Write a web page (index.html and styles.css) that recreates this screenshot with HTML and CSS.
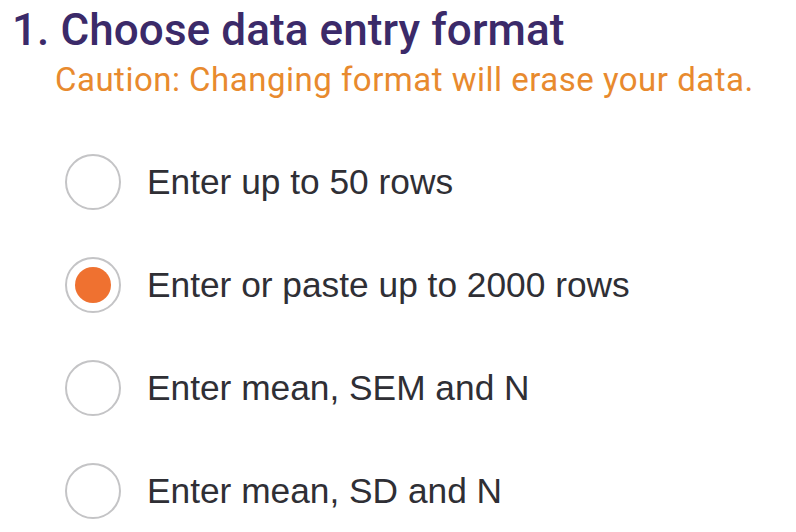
FILE: index.html
```html
<!doctype html>
<html lang="en">
  <head>
    <meta charset="utf-8">
    <title>Data entry format</title>
    <link rel="stylesheet" href="styles.css">
  </head>
  <body>
    <section class="step">
      <h1 class="step-title">1. Choose data entry format</h1>
      <p class="caution">Caution: Changing format will erase your data.</p>

      <div class="options">
        <label class="option">
          <input type="radio" name="format" value="rows50">
          <span class="radio"></span>
          <span class="option-text">Enter up to 50 rows</span>
        </label>
        <label class="option">
          <input type="radio" name="format" value="rows2000" checked>
          <span class="radio"></span>
          <span class="option-text">Enter or paste up to 2000 rows</span>
        </label>
        <label class="option">
          <input type="radio" name="format" value="sem">
          <span class="radio"></span>
          <span class="option-text">Enter mean, SEM and N</span>
        </label>
        <label class="option">
          <input type="radio" name="format" value="sd">
          <span class="radio"></span>
          <span class="option-text">Enter mean, SD and N</span>
        </label>
      </div>
    </section>
  </body>
</html>
```

FILE: styles.css
```css
html {
  --title-color: #3b2a69;
  --caution-color: #e88a2e;
  --radio-color: #ef7130;
  --text-color: #2f2f35;
}

body {
  margin: 0;
  background-color: #ffffff;
}

.step {
  padding: 4px 0 0 12px;
}

.step-title {
  margin: 0;
  font-family: Roboto, sans-serif;
  font-weight: 500;
  font-size: 44px;
  line-height: 52px;
  letter-spacing: 0.002em;
  color: var(--title-color);
}

.caution {
  margin: 4px 0 0 43px;
  font-family: Roboto, sans-serif;
  font-weight: 400;
  font-size: 33px;
  line-height: 40px;
  letter-spacing: 0.015em;
  color: var(--caution-color);
}

.options {
  display: flex;
  flex-direction: column;
  gap: 47px;
  margin: 54px 0 0 53px;
}

.option {
  display: flex;
  align-items: center;
  gap: 26px;
  cursor: pointer;
}

.option input {
  display: none;
}

.radio {
  box-sizing: border-box;
  width: 56px;
  height: 56px;
  border: 2px solid #c4c4c6;
  border-radius: 50%;
  display: flex;
  align-items: center;
  justify-content: center;
  background-color: #fff;
}

.option input:checked + .radio::after {
  content: "";
  width: 36px;
  height: 36px;
  border-radius: 50%;
  background-color: var(--radio-color);
}

.option-text {
  font-family: "Liberation Sans", Arial, sans-serif;
  font-size: 35.3px;
  color: var(--text-color);
}
```
